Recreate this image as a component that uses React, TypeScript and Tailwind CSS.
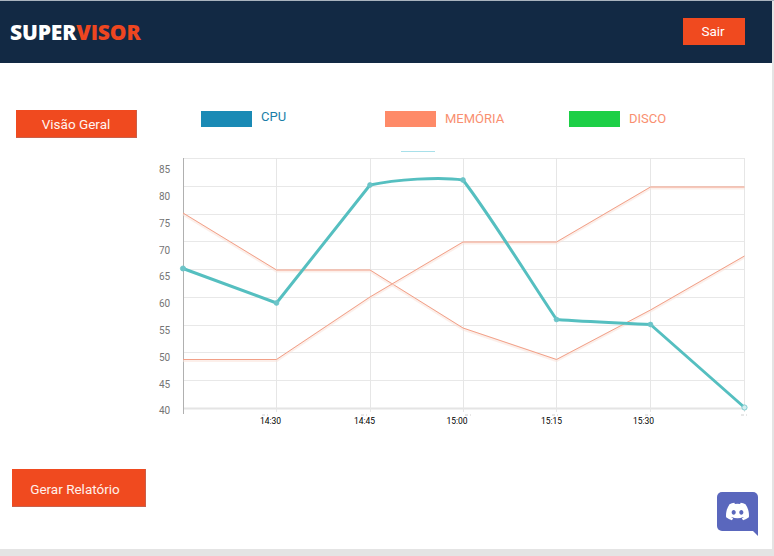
import { FaDiscord } from "react-icons/fa";

const xs = [183.5, 276.5, 370.5, 463.5, 556.5, 650.5, 744.5];
const ys = [158.5, 186.5, 214.5, 241.5, 269.5, 297.5, 325.5, 352.5, 380.5];
const yLabels = [
  ["85", 173],
  ["80", 200],
  ["75", 227],
  ["70", 254],
  ["65", 280],
  ["60", 307],
  ["55", 334],
  ["50", 361],
  ["45", 388],
  ["40", 414],
] as const;
const xLabels = [
  ["14:30", 270.5],
  ["14:45", 364.5],
  ["15:00", 457],
  ["15:15", 551.5],
  ["15:30", 643.5],
] as const;
const cutMarks = [262, 361, 465, 552, 645, 741];

const salmonA = "M183 213 L276.5 270 L370 270 L463 328 L556.5 359.5 L650.5 310 L744.5 256";
const salmonB = "M183 359.5 L276.5 359.5 L370 297 L463 242 L556.5 242 L650.5 187 L744.5 187";
const teal =
  "M183 268.5 L276.5 303 L370 185 C395 179.5 440 176.5 463 180 C490 215 530 280 556.5 319.5 C590 322 625 323 650.5 324.5 L744.5 407.5";
const points: [number, number][] = [
  [183, 268.5],
  [276.5, 303],
  [370, 185],
  [463, 180],
  [556.5, 319.5],
  [650.5, 324.5],
  [744.5, 407.5],
];

function Chart() {
  return (
    <svg width="620" height="284" viewBox="150 148 620 284" className="block">
      <line x1="401" y1="151.5" x2="435" y2="151.5" stroke="#a8e0ea" strokeWidth="1" />
      {ys.map((y) => (
        <line key={y} x1="183" y1={y} x2="745" y2={y} stroke="#e8e8e8" strokeWidth="1" />
      ))}
      <line x1="183" y1="408.5" x2="745" y2="408.5" stroke="#e4e4e4" strokeWidth="2" />
      {xs.map((x, i) => (
        <line
          key={x}
          x1={x}
          y1="158"
          x2={x}
          y2={i === 0 ? 414 : 412}
          stroke={i === 0 ? "#b0b0b0" : "#e6e6e6"}
          strokeWidth="1"
        />
      ))}
      {cutMarks.map((x) => (
        <line key={x} x1={x} y1="415" x2={x + 6} y2="415" stroke="#d0d0d0" strokeWidth="1" strokeDasharray="3 2" />
      ))}
      {[salmonA, salmonB].map((d) => (
        <g key={d} fill="none" strokeLinejoin="round">
          <path d={d} stroke="#f9dfd6" strokeOpacity="0.5" strokeWidth="3" transform="translate(0 1)" />
          <path d={d} stroke="#f2a088" strokeWidth="1" />
        </g>
      ))}
      <path d={teal} fill="none" stroke="#55bfc0" strokeWidth="3" strokeLinejoin="round" />
      {points.map(([x, y], i) => (
        <circle
          key={x}
          cx={x}
          cy={y}
          r={i === 0 || i === 6 ? 2.6 : 2.4}
          fill={i === 6 ? "#d3eef0" : "#6cc4c8"}
          stroke="#6cc4c8"
          strokeWidth="0.8"
        />
      ))}
      {yLabels.map(([t, y]) => (
        <text key={t} x="159" y={y} fontSize="10" fill="#757575" fontFamily="Roboto, sans-serif">
          {t}
        </text>
      ))}
      {xLabels.map(([t, x]) => (
        <text
          key={t}
          x={x}
          y="424"
          fontSize="8.5"
          fill="#000000"
          textAnchor="middle"
          fontFamily="Roboto, sans-serif"
        >
          {t}
        </text>
      ))}
    </svg>
  );
}

function Legend({
  label,
  bar,
  text,
  shift,
}: {
  label: string;
  bar: string;
  text: string;
  shift: string;
}) {
  return (
    <div className="flex w-[184px] items-start gap-[9px]">
      <div className={`h-[16px] w-[51px] ${bar}`} />
      <span className={`text-[13px] leading-[16px] ${text} ${shift}`}>{label}</span>
    </div>
  );
}

export default function App() {
  return (
    <div className="flex h-[556px] w-[774px] flex-col overflow-hidden bg-[#e4e4e4] font-['Roboto',sans-serif]">
      <div className="h-px w-full bg-[#a9b3be]" />
      <div className="flex min-h-0 flex-1 flex-col bg-white mr-[2px] mb-[7px]">
        <header className="flex h-[62px] items-center justify-between bg-[#122944] pl-[10px] pr-[27px]">
          <div className="font-['Open_Sans',sans-serif] text-[21px] font-extrabold leading-none tracking-[-0.15px]">
            <span className="text-white">SUPER</span>
            <span className="text-[#ee4620]">VISOR</span>
          </div>
          <button className="-mt-[1px] flex h-[27px] w-[62px] items-center justify-center bg-[#f04a1f] pr-[2px] text-[13.5px] text-white">
            Sair
          </button>
        </header>

        <div className="flex h-[393px] pl-[16px]">
          <div className="w-[121px] pt-[47px]">
            <button className="flex h-[28px] w-[121px] items-center justify-center border-r border-b border-[#c9604a] bg-[#f04a1f] pt-[2px] text-[13.5px] font-normal text-[#fff4f0]">
              Visão Geral
            </button>
          </div>
          <div className="flex flex-col">
            <div className="flex h-[64px] items-start pl-[64px] pt-[48px]">
              <Legend label="CPU" bar="bg-[#1a8ab5]" text="text-[#1a7ea8]" shift="-mt-[2px]" />
              <Legend label="MEMÓRIA" bar="bg-[#fe8a68]" text="text-[#f98f70]" shift="mt-0" />
              <Legend label="DISCO" bar="bg-[#1ccf46]" text="text-[#f98f70]" shift="mt-0" />
            </div>
            <div className="pl-[13px] pt-[21px]">
              <Chart />
            </div>
          </div>
        </div>

        <div className="flex flex-1 items-start justify-between pl-[12px] pr-[14px] pt-[13px]">
          <button className="flex h-[38px] w-[134px] items-center justify-center border-r border-b border-[#c9604a] bg-[#f04a1f] pt-[4px] pr-[7px] text-[13.5px] font-normal text-[#fff0ea]">
            Gerar Relatório
          </button>
          <div className="relative mt-[23px] h-[44px] w-[41px]">
            <div className="flex h-[39px] w-[41px] items-center justify-center rounded-[5px] bg-[#5a67bd] text-white">
              <FaDiscord size={25} />
            </div>
            <div className="absolute bottom-0 right-0 h-[10px] w-[10px] bg-[#5a67bd] [clip-path:polygon(100%_100%,0_0,100%_0)]" />
          </div>
        </div>
      </div>
    </div>
  );
}
